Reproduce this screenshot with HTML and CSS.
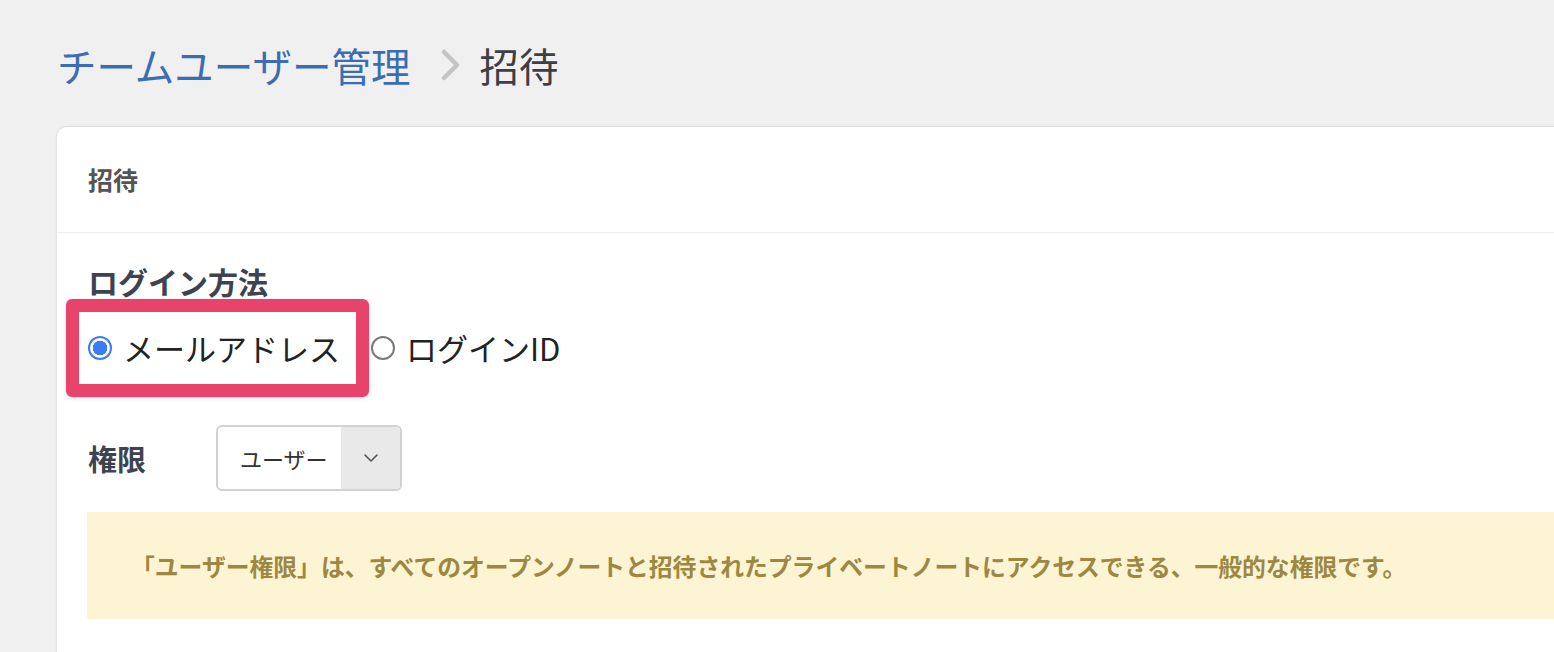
FILE: index.html
```html
<!DOCTYPE html>
<html lang="ja">
<head>
<meta charset="utf-8">
<title>招待</title>
<link rel="stylesheet" href="styles.css">
</head>
<body>
<div class="page">
  <nav class="crumbs">
    <a class="crumb-link" href="#">チームユーザー管理</a>
    <svg class="crumb-sep" width="22" height="34" viewBox="0 0 22 34"><path d="M4 4 L17 17 L4 30" fill="none" stroke="#c4c4c4" stroke-width="4.5" stroke-linecap="round" stroke-linejoin="round"/></svg>
    <span class="crumb-current">招待</span>
  </nav>
  <section class="card">
    <header class="card-head">招待</header>
    <div class="card-body">
      <div class="field-label">ログイン方法</div>
      <div class="radio-row">
        <span class="highlight">
          <span class="option"><span class="radio radio-on"></span><span class="option-text">メールアドレス</span></span>
        </span>
        <span class="option option-plain"><span class="radio"></span><span class="option-text">ログインID</span></span>
      </div>
      <div class="role-row">
        <span class="role-label">権限</span>
        <div class="select">
          <span class="select-value">ユーザー</span>
          <span class="select-arrow"><svg width="16" height="10" viewBox="0 0 16 10"><path d="M2 2 L8 8 L14 2" fill="none" stroke="#555" stroke-width="1.6" stroke-linecap="round" stroke-linejoin="round"/></svg></span>
        </div>
      </div>
      <div class="notice">「ユーザー権限」は、すべてのオープンノートと招待されたプライベートノートにアクセスできる、一般的な権限です。</div>
    </div>
  </section>
</div>
</body>
</html>
```

FILE: styles.css
```css
html, body {
  margin: 0;
  padding: 0;
  background: #f0f0f0;
  overflow: hidden;
}
body {
  font-family: "Noto Sans CJK JP", "Noto Sans", sans-serif;
  color: #222;
}
.page {
  padding: 41px 0 0 57px;
}
.crumbs {
  display: flex;
  align-items: center;
  height: 48px;
  font-size: 39.5px;
  line-height: 48px;
}
.crumb-link {
  color: #3a6db3;
  text-decoration: none;
}
.crumb-sep {
  margin: 0 18px 0 29px;
}
.crumb-current {
  color: #3c3f45;
}
.card {
  margin-top: 38px;
  margin-right: -40px;
  background: #fff;
  border-radius: 9px;
  box-shadow: 0 -1px 0 #dcdcdc, 0 0 3px rgba(0,0,0,0.12);
  height: 600px;
}
.card-head {
  height: 103px;
  padding-bottom: 2px;
  display: flex;
  align-items: center;
  padding-left: 31px;
  font-size: 25px;
  font-weight: bold;
  color: #555;
  border-bottom: 1px solid #eeeeee;
}
.card-body {
  padding: 30px 0 0 31px;
}
.field-label {
  font-size: 30px;
  line-height: 36px;
  font-weight: bold;
  color: #3d4350;
}
.radio-row {
  display: flex;
  align-items: center;
  margin-left: -22px;
}
.highlight {
  display: flex;
  align-items: center;
  border: 13px solid #e8436b;
  border-radius: 6px;
  height: 72px;
  padding: 0 16px 0 9px;
  box-shadow: 0 1px 4px rgba(0,0,0,0.15);
}
.option {
  display: flex;
  align-items: center;
}
.option-plain {
  margin-left: 2px;
}
.radio {
  box-sizing: border-box;
  width: 24px;
  height: 24px;
  border-radius: 50%;
  border: 2px solid #7a7a7a;
  background: #fff;
  margin-right: 11px;
}
.radio-on {
  border-color: #3b7cf5;
  background: radial-gradient(circle, #3b7cf5 0 7px, #fff 7.5px);
}
.option-text {
  font-size: 31px;
  line-height: 40px;
  color: #222;
}
.role-row {
  display: flex;
  align-items: center;
  margin-top: 28px;
}
.role-label {
  width: 128px;
  font-size: 29px;
  font-weight: bold;
  color: #3d4350;
}
.select {
  box-sizing: border-box;
  display: flex;
  width: 186px;
  height: 66px;
  border: 2px solid #d2d2d2;
  border-radius: 6px;
  overflow: hidden;
}
.select-value {
  flex: 1;
  display: flex;
  align-items: center;
  padding-left: 22px;
  font-size: 22px;
  color: #333;
}
.select-arrow {
  width: 59px;
  background: #e9e9e9;
  display: flex;
  align-items: center;
  justify-content: center;
}
.notice {
  margin-top: 21px;
  margin-left: -1px;
  height: 107px;
  display: flex;
  align-items: center;
  padding-left: 44px;
  background: #fdf4d3;
  color: #9c8841;
  font-size: 23.8px;
  font-weight: bold;
  white-space: nowrap;
}
```
